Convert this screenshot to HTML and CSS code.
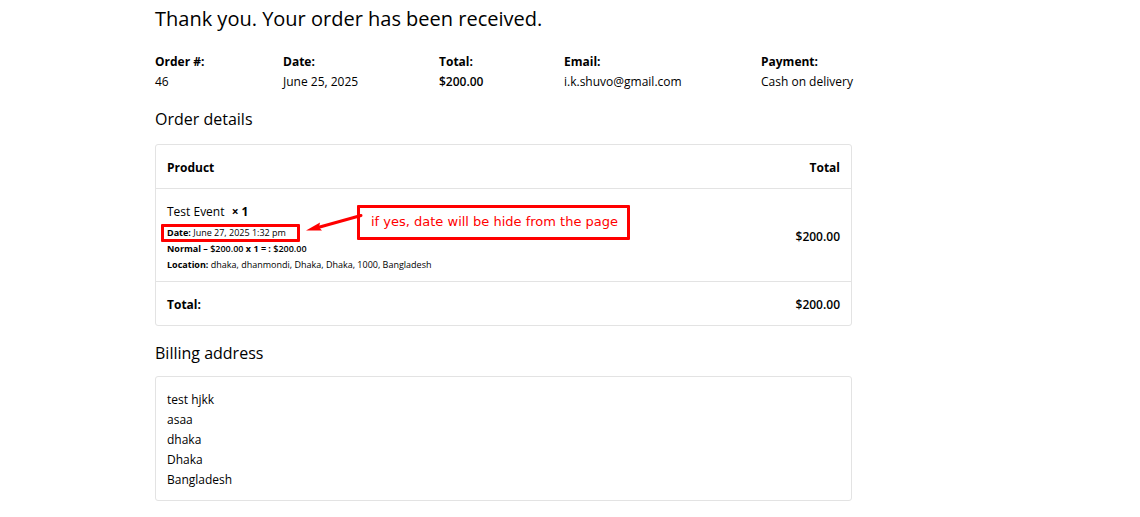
FILE: index.html
```html
<!DOCTYPE html>
<html lang="en">
<head>
<meta charset="utf-8">
<meta name="viewport" content="width=device-width, initial-scale=1">
<title>Order received</title>
<link rel="stylesheet" href="styles.css">
</head>
<body>
<div class="page">
<main class="order">
  <h1 class="title">Thank you. Your order has been received.</h1>
  <dl class="overview">
    <div><dt>Order #:</dt><dd>46</dd></div>
    <div><dt>Date:</dt><dd>June 25, 2025</dd></div>
    <div><dt>Total:</dt><dd class="amount">$200.00</dd></div>
    <div><dt>Email:</dt><dd>i.k.shuvo@gmail.com</dd></div>
    <div><dt>Payment:</dt><dd>Cash on delivery</dd></div>
  </dl>
  <h2 class="heading">Order details</h2>
  <div class="details">
    <table class="table">
      <thead>
        <tr><th scope="col">Product</th><th scope="col">Total</th></tr>
      </thead>
      <tbody>
        <tr>
          <td class="product">
            <p class="name">Test Event <strong>× 1</strong></p>
            <ul class="meta">
              <li><b>Date:</b> <span class="medium">June 27, 2025 1:32 pm</span></li>
              <li><b>Normal – <span class="amount">$200.00</span> x 1 = : <span class="amount">$200.00</span></b></li>
              <li><b>Location:</b> dhaka, dhanmondi, Dhaka, Dhaka, 1000, Bangladesh</li>
            </ul>
          </td>
          <td class="amount">$200.00</td>
        </tr>
      </tbody>
      <tfoot>
        <tr><th scope="row">Total:</th><td class="amount">$200.00</td></tr>
      </tfoot>
    </table>
    <div class="highlight"></div>
    <div class="callout">if yes, date will be hide from the page</div>
    <svg class="arrow" width="58" height="22" viewBox="0 0 58 22" aria-hidden="true">
      <path d="M55 2.500 12 14.500" stroke="#f00" stroke-width="3" stroke-linecap="round" fill="none"/>
      <path d="M0 17.500 14 9.500 13 14.500 16 17.500Z" fill="#f00"/>
    </svg>
  </div>
  <h2 class="heading">Billing address</h2>
  <address class="address">test hjkk<br>asaa<br>dhaka<br>Dhaka<br>Bangladesh</address>
</main>
</div>
</body>
</html>
```
FILE: styles.css
```css
* { box-sizing: border-box; }
body {
  margin: 0;
  background: #fff;
  color: #000;
  font: 12px/20px "Segoe UI", "Open Sans", "Noto Sans", sans-serif;
}
.page {
  display: grid;
  grid-template-columns: 155fr 697fr 288fr;
}
.order { grid-column: 2; min-width: 0; padding: 4px 0 16px; }
h1, h2, p, dl, dd, ul { margin: 0; padding: 0; }
.title { font-size: 20px; line-height: 30px; font-weight: 400; white-space: nowrap; }
.overview {
  display: grid;
  grid-template-columns: 128fr 156fr 125fr 197fr 91fr;
  margin: 18px 0 15px;
  white-space: nowrap;
}
.overview > div { min-width: 0; }
dt, b, strong, th { font-weight: 700; }
.amount { font-weight: 600; }
.heading { font-size: 16px; line-height: 24px; font-weight: 400; }
.details { position: relative; margin: 13px 0 15px; }
.table {
  width: 100%;
  border: 1px solid #e3e3e3;
  border-radius: 3px;
  border-spacing: 0;
}
.table th, .table td { padding: 13px 11px 10px; text-align: left; }
.table tr > :last-child { text-align: right; }
.table thead th { border-bottom: 1px solid #e3e3e3; }
.table tfoot > tr > * { border-top: 1px solid #e3e3e3; }
.table .product { padding-bottom: 8px; }
.name strong { margin-left: 4px; }
.meta { margin-top: 3px; list-style: none; font-size: 9px; line-height: 16px; white-space: nowrap; }
.medium { font-weight: 500; }
.highlight {
  position: absolute;
  left: 6px;
  top: 80px;
  width: 139px;
  height: 18px;
  border: 3px solid #f00;
  border-radius: 1px;
}
.callout {
  position: absolute;
  left: 202px;
  top: 61px;
  padding: 4px 9px 6px 11px;
  border: 3px solid #f00;
  border-radius: 1px;
  color: #f00;
  font: 13px/19px "DejaVu Sans", sans-serif;
  white-space: nowrap;
}
.arrow { position: absolute; left: 151px; top: 69px; }
.address {
  margin-top: 11px;
  padding: 13px 11px 10px;
  border: 1px solid #e3e3e3;
  border-radius: 3px;
  font-style: normal;
}
```
